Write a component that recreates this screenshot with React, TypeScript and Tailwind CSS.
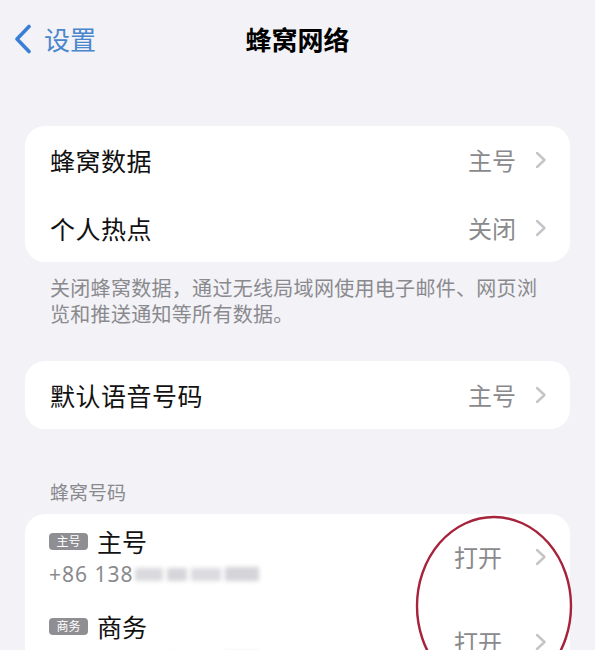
import React from 'react';

const FONT = { fontFamily: '"Noto Sans CJK SC", "Noto Sans", sans-serif' };

const Chevron = () => (
  <svg width="12" height="18" viewBox="0 0 12 18" className="shrink-0">
    <path d="M2 2 L9.5 9 L2 16" fill="none" stroke="#c5c5c9" strokeWidth="2.4" strokeLinecap="round" strokeLinejoin="round" />
  </svg>
);

const Row = ({ label, value }: { label: string; value: string }) => (
  <div className="flex h-[68px] items-center pl-[25px] pr-[23px]">
    <span className="flex-1 text-[25px] leading-none tracking-[0.5px] text-[#111]">{label}</span>
    <span className="mr-[19px] text-[24px] leading-none text-[#8a8a8e]">{value}</span>
    <Chevron />
  </div>
);

const Badge = ({ text }: { text: string }) => (
  <span className="flex h-[17px] w-[39px] items-center justify-center rounded-[4px] bg-[#8e8e93] text-[12px] leading-none text-white">
    {text}
  </span>
);

const Blurred = () => (
  <span className="ml-[1px] flex h-[16px] items-center gap-[4px] blur-[2px]">
    <span className="h-[13px] w-[28px] bg-[#dadade]" />
    <span className="h-[13px] w-[20px] bg-[#d6d6da]" />
    <span className="h-[13px] w-[30px] bg-[#dcdce0]" />
    <span className="h-[14px] w-[34px] bg-[#d4d4d9]" />
  </span>
);

const NumberRow = ({ badge, title }: { badge: string; title: string }) => (
  <div className="flex h-[85px] items-center pl-[24px] pr-[23px]">
    <div className="flex flex-1 flex-col">
      <div className="flex h-[28px] items-center gap-[9px]">
        <Badge text={badge} />
        <span className="text-[25px] leading-none text-[#111]">{title}</span>
      </div>
      <div className="mt-[7px] flex h-[24px] items-center">
        <span className="text-[21px] leading-none tracking-[1px] text-[#8a8a8e]" style={{ fontFamily: '"Noto Sans", sans-serif' }}>
          +86 138
        </span>
        <Blurred />
      </div>
    </div>
    <span className="mr-[33px] text-[24px] leading-none text-[#8a8a8e]">打开</span>
    <Chevron />
  </div>
);

export default function App() {
  return (
    <div className="h-[650px] w-[595px] overflow-hidden bg-[#f2f2f7]" style={FONT}>
      {/* nav bar */}
      <div className="grid h-[78px] grid-cols-[1fr_auto_1fr] items-center">
        <div className="flex items-center pl-[14px]">
          <svg width="18" height="30" viewBox="0 0 18 30">
            <path d="M15 2.5 L3 15 L15 27.5" fill="none" stroke="#3a7fd6" strokeWidth="3.6" strokeLinecap="round" strokeLinejoin="round" />
          </svg>
          <span className="ml-[12px] text-[26px] leading-none text-[#4a86cc]">设置</span>
        </div>
        <span className="text-[26px] font-bold leading-none text-black">蜂窝网络</span>
        <div />
      </div>

      <div className="mx-[25px] mt-[48px] rounded-[20px] bg-white">
        <Row label="蜂窝数据" value="主号" />
        <Row label="个人热点" value="关闭" />
      </div>

      <p className="mt-[13px] pl-[50px] pr-[50px] text-[20px] leading-[26px] tracking-[0.3px] text-[#8a8a8e]">
        关闭蜂窝数据，通过无线局域网使用电子邮件、网页浏览和推送通知等所有数据。
      </p>

      <div className="mx-[25px] mt-[34px] rounded-[20px] bg-white">
        <Row label="默认语音号码" value="主号" />
      </div>

      <div className="mt-[51px] mb-[10px] pl-[50px] text-[19px] leading-[24px] text-[#8a8a8e]">蜂窝号码</div>

      <div className="relative mx-[25px] rounded-[20px] bg-white">
        <NumberRow badge="主号" title="主号" />
        <NumberRow badge="商务" title="商务" />
        <svg className="pointer-events-none absolute left-[389px] top-[1px]" width="160" height="182" viewBox="0 0 160 182">
          <ellipse cx="80" cy="91" rx="77" ry="89" fill="none" stroke="#a6233b" strokeWidth="2.4" />
        </svg>
      </div>
    </div>
  );
}
